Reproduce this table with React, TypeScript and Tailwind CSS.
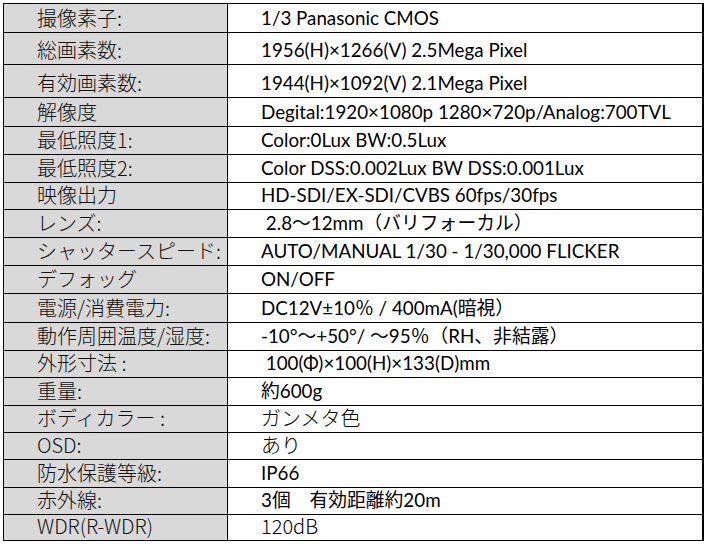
import React from "react";

type Row = { label: string; value: string; h: string; gothicValue?: boolean; indent?: boolean };

const rows: Row[] = [
  { label: "撮像素子:", value: "1/3 Panasonic CMOS", h: "h-[29px]" },
  { label: "総画素数:", value: "1956(H)×1266(V) 2.5Mega Pixel", h: "h-[32px]" },
  { label: "有効画素数:", value: "1944(H)×1092(V) 2.1Mega Pixel", h: "h-[33px]" },
  { label: "解像度", value: "Degital:1920×1080p 1280×720p/Analog:700TVL", h: "h-[29px]" },
  { label: "最低照度1:", value: "Color:0Lux BW:0.5Lux", h: "h-[28px]" },
  { label: "最低照度2:", value: "Color DSS:0.002Lux BW DSS:0.001Lux", h: "h-[28px]" },
  { label: "映像出力", value: "HD-SDI/EX-SDI/CVBS 60fps/30fps", h: "h-[27px]" },
  { label: "レンズ:", value: "2.8～12mm（バリフォーカル）", h: "h-[28px]", indent: true },
  { label: "シャッタースピード:", value: "AUTO/MANUAL 1/30 - 1/30,000 FLICKER", h: "h-[28px]" },
  { label: "デフォッグ", value: "ON/OFF", h: "h-[28px]" },
  { label: "電源/消費電力:", value: "DC12V±10％ / 400mA(暗視）", h: "h-[29px]" },
  { label: "動作周囲温度/湿度:", value: "-10°～+50°/ ～95％（RH、非結露）", h: "h-[28px]" },
  { label: "外形寸法 :", value: "100(Φ)×100(H)×133(D)mm", h: "h-[27px]", indent: true },
  { label: "重量:", value: "約600g", h: "h-[28px]" },
  { label: "ボディカラー :", value: "ガンメタ色", h: "h-[27px]", gothicValue: true },
  { label: "OSD:", value: "あり", h: "h-[27px]", gothicValue: true },
  { label: "防水保護等級:", value: "IP66", h: "h-[28px]" },
  { label: "赤外線:", value: "3個　有効距離約20m", h: "h-[27px]" },
  { label: "WDR(R-WDR)", value: "120dB", h: "h-[26px]", gothicValue: true },
];

const latin = "font-['Lato','Noto_Sans_CJK_JP',sans-serif]";
const gothic = "font-['Noto_Sans_CJK_JP',sans-serif] font-light";

export default function App() {
  return (
    <div className="w-[704px] h-[544px] bg-white pt-[3px] pl-[3px]">
      <div className="w-[701px] border-t border-l border-r-2 border-black flex flex-col">
        {rows.map((r, i) => (
          <div key={i} className={`flex border-b border-black ${r.h}`}>
            <div className={`w-[224px] shrink-0 bg-[#d9d9d9] border-r border-black flex items-end pl-[33px] pb-[3px] text-[20px] leading-[22px] text-[#111] ${gothic}`}>
              {r.label}
            </div>
            <div
              className={`flex-1 flex items-end pb-[3px] text-black whitespace-pre ${
                r.gothicValue ? `${gothic} text-[20px] leading-[22px] pl-[33px]` : `${latin} text-[18.8px] leading-[22px] pl-[33px]`
              }`}
            >
              {r.indent ? " " + r.value : r.value}
            </div>
          </div>
        ))}
      </div>
    </div>
  );
}
